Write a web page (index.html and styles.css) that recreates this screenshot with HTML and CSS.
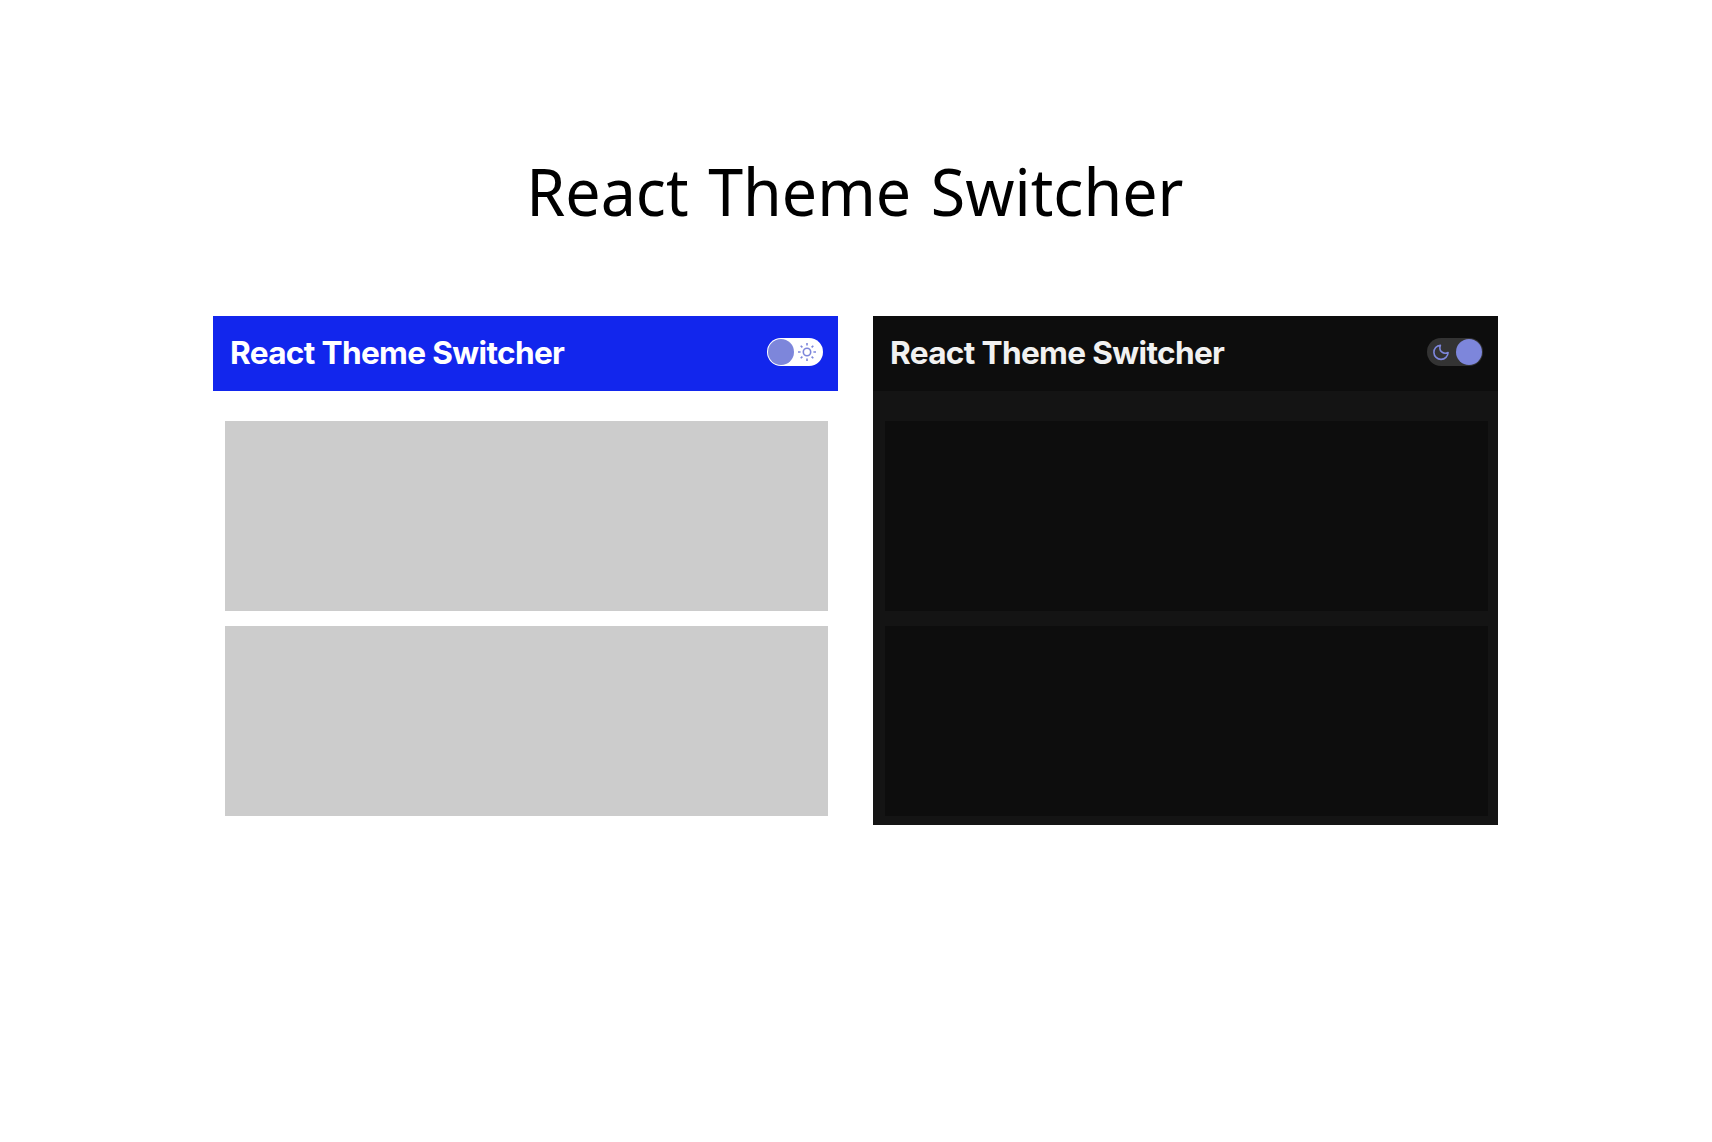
FILE: index.html
```html
<!DOCTYPE html>
<html lang="en">
<head>
<meta charset="utf-8">
<title>React Theme Switcher</title>
<link rel="stylesheet" href="styles.css">
</head>
<body>
<h1 class="title"><span>React Theme Switcher</span></h1>
<main class="previews">
  <section class="panel light">
    <header class="bar">
      <h2 class="name">React Theme Switcher</h2>
      <div class="toggle">
        <span class="knob"></span>
        <svg class="icon" viewBox="0 0 18 18"><circle cx="9" cy="9" r="3.7"/><path d="M9 0v2.6M9 15.4V18M0 9h2.6M15.4 9H18M2.7 2.7l1.7 1.7M13.6 13.6l1.7 1.7M2.7 15.3l1.7-1.7M13.6 4.4l1.7-1.7"/></svg>
      </div>
    </header>
    <div class="cards"><div class="card"></div><div class="card"></div></div>
  </section>
  <section class="panel dark">
    <header class="bar">
      <h2 class="name">React Theme Switcher</h2>
      <div class="toggle">
        <svg class="icon" viewBox="0 0 18 18"><path d="M8.4 2.2A7.1 7.1 0 1 0 16.1 9.5C11.5 11.8 6.2 8.2 8.4 2.2Z"/></svg>
        <span class="knob"></span>
      </div>
    </header>
    <div class="cards"><div class="card"></div><div class="card"></div></div>
  </section>
</main>
</body>
</html>
```
FILE: styles.css
```css
* { box-sizing: border-box; }
body { margin: 0; padding-top: 145px; background: #fff; }
.title {
  margin: 0 0 81px;
  height: 90px;
  padding-right: 2px;
  text-align: center;
  font: 400 66px/90px "Noto Sans", sans-serif;
  word-spacing: 3.5px;
  color: #000;
}
.title span { display: inline-block; transform: scaleX(0.95); }
.previews { display: flex; gap: 35px; margin-left: 213px; }
.panel { width: 625px; height: 509px; }
.bar {
  display: flex;
  justify-content: space-between;
  align-items: center;
  height: 75px;
  padding: 0 15px 3px 17px;
}
.name {
  margin: 0;
  padding-top: 2px;
  font: 700 31.6px/40px Inter, sans-serif;
  letter-spacing: -0.66px;
  white-space: nowrap;
}
.toggle {
  display: flex;
  justify-content: space-between;
  align-items: center;
  width: 56px;
  height: 28px;
  padding: 0 1px;
  border-radius: 14px;
}
.knob { width: 26px; height: 26px; border-radius: 50%; background: #7d86db; }
.icon { width: 18px; height: 18px; fill: none; stroke: #7d86db; stroke-width: 1.6; stroke-linejoin: round; }
.cards { display: grid; gap: 15px; padding: 30px 10px 0 12px; }
.card { height: 190px; }
.light .bar { background: #1226ed; }
.light .name { color: #fff; }
.light .toggle { background: #fff; padding-right: 7px; }
.light .card { background: #ccc; }
.dark { background: #141414; }
.dark .bar, .dark .card { background: #0d0d0d; }
.dark .name { color: #f1f1f1; }
.dark .toggle { background: #333; padding-left: 5px; }
```
